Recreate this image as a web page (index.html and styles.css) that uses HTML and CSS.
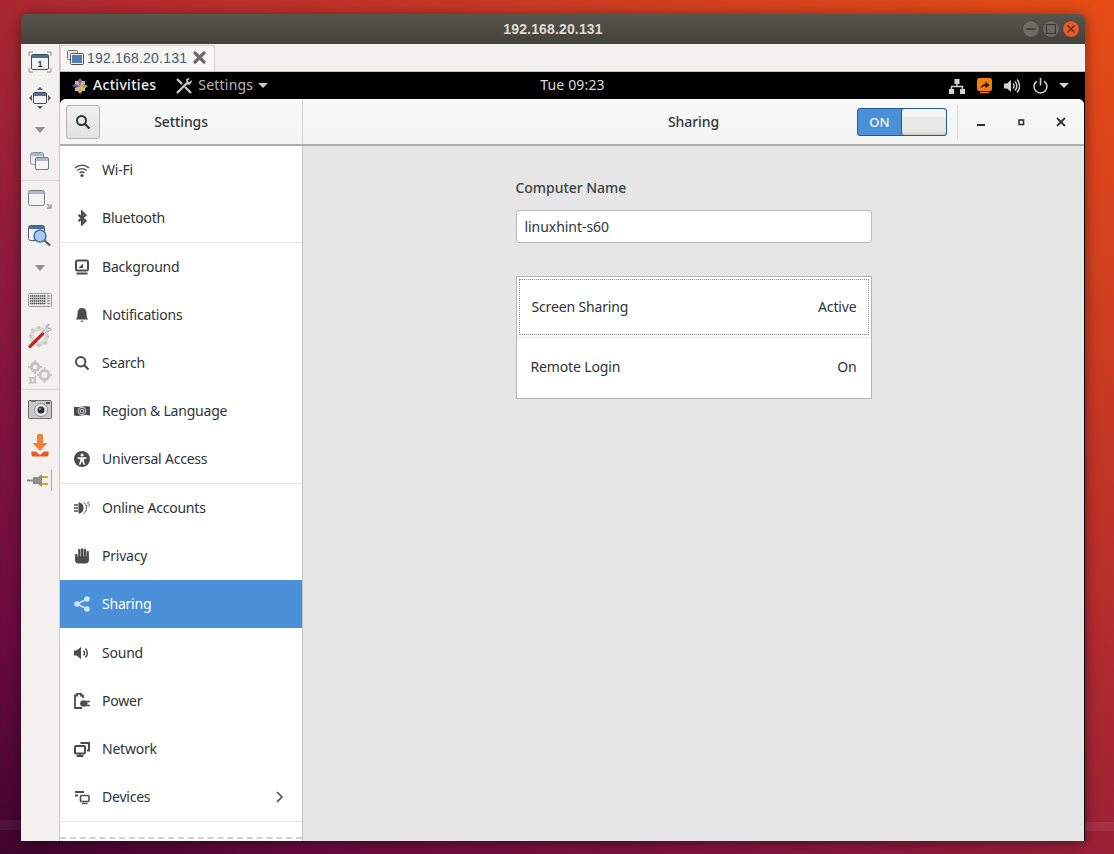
FILE: index.html
```html
<!DOCTYPE html>
<html lang="en">
<head>
<meta charset="utf-8">
<title>192.168.20.131</title>
<link rel="stylesheet" href="styles.css">
</head>
<body>
<div class="window">
  <div class="titlebar">
    <span class="title-text">192.168.20.131</span>
    <div class="wm-buttons">
      <span class="wm wm-min"><svg width="16" height="16" viewBox="0 0 16 16"><path d="M3.500 8h9" stroke="#3a3935" stroke-width="1.400"/></svg></span>
      <span class="wm wm-max"><svg width="16" height="16" viewBox="0 0 16 16"><rect x="3.500" y="3.500" width="9" height="9" fill="none" stroke="#3a3935" stroke-width="1.200"/></svg></span>
      <span class="wm wm-close"><svg width="16" height="16" viewBox="0 0 16 16"><path d="M4.500 4.500l7 7M11.500 4.500l-7 7" stroke="#6b2a12" stroke-width="1.500"/></svg></span>
    </div>
  </div>
  <div class="window-body">
    <div class="tools">
      <div class="tool">
        <svg width="24" height="22" viewBox="0 0 24 22"><path d="M1 5V1h4M19 1h4v4M23 17v4h-4M5 21H1v-4" fill="none" stroke="#8b8f92"/><rect x="3.500" y="3.500" width="17" height="15" rx="1.500" fill="#f4f4f4" stroke="#4a4d50"/><rect x="4" y="4" width="16" height="3" fill="#4d6f9e"/><text x="12" y="15.500" class="tool-num">1</text></svg>
      </div>
      <div class="tool">
        <svg width="24" height="24" viewBox="0 0 24 24"><path d="M12 1l3 3H9zM12 23l-3-3h6zM1 12l3-3v6zM23 12l-3 3V9z" fill="#55585a"/><rect x="5.500" y="6.500" width="13" height="11" rx="1.500" fill="#f4f4f4" stroke="#4a4d50"/><rect x="6" y="7" width="12" height="3" fill="#4d6f9e"/></svg>
      </div>
      <div class="tool tool-sm"><svg width="10" height="6" viewBox="0 0 10 6"><path d="M0 0h10L5 6z" fill="#8e8e8a"/></svg></div>
      <div class="tool">
        <svg width="20" height="20" viewBox="0 0 20 20"><rect x="0.500" y="0.500" width="13" height="12" rx="2" fill="#e9e9ea" stroke="#8f9296"/><rect x="1" y="1" width="12" height="3" fill="#a9b6cb"/><rect x="5.500" y="5.500" width="13" height="12" rx="1.500" fill="#f6f6f6" stroke="#74777b"/><rect x="6" y="6" width="12" height="3" fill="#a6b7d0"/></svg>
      </div>
      <div class="tool-sep"></div>
      <div class="tool">
        <svg width="26" height="20" viewBox="0 0 26 20"><rect x="1.500" y="0.500" width="16" height="15" rx="2" fill="#f2f2f2" stroke="#7b7e82"/><rect x="2" y="1" width="15" height="3" fill="#a6b7d0"/><path d="M20 14l4 4M24 14v4h-4" fill="none" stroke="#9b9d9f" stroke-width="1.300"/></svg>
      </div>
      <div class="tool">
        <svg width="24" height="24" viewBox="0 0 24 24"><rect x="0.500" y="1.500" width="16" height="15" rx="2" fill="#f2f2f2" stroke="#55585c"/><rect x="1" y="2" width="15" height="3" fill="#4d6f9e"/><circle cx="12" cy="12" r="6" fill="#a9c8ec" stroke="#3f6ea8" stroke-width="1.500"/><path d="M16.500 16.500l5.500 5" stroke="#55585c" stroke-width="2.200"/></svg>
      </div>
      <div class="tool tool-sm"><svg width="10" height="6" viewBox="0 0 10 6"><path d="M0 0h10L5 6z" fill="#8e8e8a"/></svg></div>
      <div class="tool">
        <svg width="24" height="14" viewBox="0 0 24 14"><rect x="0.500" y="0.500" width="23" height="13" rx="1" fill="#ededed" stroke="#9a9c9c"/><path d="M2 3h16M2 5.500h16M2 8h16M2 10.500h16" stroke="#47484a" stroke-width="1.500" stroke-dasharray="1.500 .5"/><path d="M19.500 3h2M19.500 5.500h2M19.500 8h2M19.500 10.500h2" stroke="#47484a" stroke-width="1.500" stroke-dasharray="1 .5"/></svg>
      </div>
      <div class="tool">
        <svg width="24" height="24" viewBox="0 0 24 24"><circle cx="11" cy="12.500" r="7.500" fill="#f4f4f4" stroke="#dadada" stroke-width="4.500"/><path d="M11 2v3M11 20v3M1 12.500h3M18 12.500h3M3.500 5l2 2M16.500 18l2 2M3.500 20l2-2" stroke="#c4c4c4" stroke-width="2.600"/><path d="M13 9.500l5-5a4 4 0 0 1 1-3.500l2.500-.5-2 2.200 1 1.800 2-.5.500 1.500a4 4 0 0 1-4.500 2L15 11z" fill="#e2e2e2" stroke="#8a8a8a" stroke-width=".7"/><path d="M2 22.500L14.500 10" stroke="#c9252b" stroke-width="3.200" stroke-linecap="round"/></svg>
      </div>
      <div class="tool">
        <svg width="25" height="25" viewBox="0 0 25 25"><g fill="none" stroke="#c4c4c2"><circle cx="7" cy="7" r="3.800" stroke-width="3"/><circle cx="16.500" cy="15" r="4.500" stroke-width="3.200"/><rect x="2.500" y="18" width="4.500" height="4.500" stroke-width="2"/><path d="M7 0v2M7 12v2M0 7h2M12 7h2M16.500 7.500v2M16.500 20.500v2M9 15h2M22 15h2M1 17l1 1M8 23l-1-1M1 24l1-1M8 16l-1 1" stroke-width="2"/></g></svg>
      </div>
      <div class="tool-sep tool-sep-2"></div>
      <div class="tool">
        <svg width="24" height="20" viewBox="0 0 24 20"><rect x="0.500" y="1.500" width="23" height="18" rx="1.500" fill="#c9c9c9" stroke="#6f6f6f"/><path d="M3 1h5v2H3z" fill="#6f6f6f"/><circle cx="13" cy="11" r="6.500" fill="#e8e8e8" stroke="#8c8c8c"/><circle cx="13" cy="11" r="3.500" fill="#25303e"/><circle cx="12" cy="10" r="1" fill="#9ab"/><rect x="18" y="3" width="4" height="2" fill="#555"/></svg>
      </div>
      <div class="tool">
        <svg width="18" height="23" viewBox="0 0 18 23"><path d="M6 1.500a1.500 1.500 0 0 1 1.500-1.500h3A1.500 1.500 0 0 1 12 1.500V9h4.500L9 17 1.500 9H6z" fill="#f0813a"/><path d="M0.500 17.500h4.500L9 21l4-3.500h4.500v3.500a1.500 1.500 0 0 1-1.500 1.500H2a1.500 1.500 0 0 1-1.500-1.500z" fill="#e45c22"/></svg>
      </div>
      <div class="tool">
        <svg width="26" height="24" viewBox="0 0 26 24"><path d="M0 11.500h7" stroke="#8a8a86" stroke-width="2"/><path d="M6 8h5l4-3v13l-4-3H6z" fill="#8e8e8a"/><path d="M15 8h6M15 15h6" stroke="#c8b21c" stroke-width="2"/><path d="M24.500 1v21" stroke="#b5b5b3" stroke-width="1.200"/></svg>
      </div>
    </div>
    <div class="session">
      <div class="tabs">
        <div class="tab">
          <svg class="tab-icon" width="17" height="15" viewBox="0 0 17 15"><rect x="0.500" y="0.500" width="10" height="9" rx="1" fill="#e7e7e7" stroke="#6d7074"/><rect x="3.500" y="3.500" width="13" height="11" rx="1" fill="#f5f5f5" stroke="#4e5256"/><rect x="5" y="5" width="10" height="8" fill="#4d7cb6"/></svg>
          <span class="tab-text">192.168.20.131</span>
          <svg class="tab-close" width="13" height="13" viewBox="0 0 13 13"><path d="M2 2l9 9M11 2l-9 9" stroke="#6a6a66" stroke-width="3.200" stroke-linecap="round"/></svg>
        </div>
      </div>
      <div class="remote">
        <div class="topbar">
          <div class="top-left">
            <span class="activities">
              <svg width="16" height="16" viewBox="0 0 16 16"><path d="M8 0l2.500 3v3.500L8 8 5.500 6.500V3z" fill="#9c5a8f"/><path d="M16 8l-3 2.500H9.500L8 8l1.500-1.500H13z" fill="#9cb23c"/><path d="M8 16l-2.500-3V9.500L8 8l2.500 1.500V13z" fill="#e2a92e"/><path d="M0 8l3-2.500h3.500L8 8 6.500 9.500H3z" fill="#4a5ea0"/><path d="M3 3h3L8 8 3 6zM13 3v3L8 8l2-5zM13 13h-3L8 8l5 2zM3 13v-3L8 8l-2 5z" fill="#c4bcae"/></svg>
              <span class="activities-label">Activities</span>
            </span>
            <span class="app-menu">
              <svg width="18" height="18" viewBox="0 0 18 18"><path d="M2 16L12 6" stroke="#c8c8c8" stroke-width="2.400"/><path d="M11 2.500a3.500 3.500 0 0 1 4-1l-2.300 2.300 1.500 1.500L16.500 3a3.500 3.500 0 0 1-4.700 4.500z" fill="#c8c8c8"/><path d="M2 2l5 5M10 10l6 6" stroke="#c8c8c8" stroke-width="2.400"/></svg>
              <span class="app-menu-label">Settings</span>
              <svg width="10" height="5" viewBox="0 0 10 5"><path d="M0 0h10L5 5z" fill="#c8c8c8"/></svg>
            </span>
          </div>
          <div class="clock">Tue 09:23</div>
          <div class="top-right">
            <svg width="16" height="16" viewBox="0 0 16 16"><path d="M5.500 1h5v5h-5zM0 11h5v5H0zM11 11h5v5h-5z" fill="#d2d2d2"/><path d="M8 6v2.500M2.500 11V8.500h11V11" fill="none" stroke="#d2d2d2" stroke-width="1.400"/></svg>
            <svg class="gap-1" width="15" height="16" viewBox="0 0 15 16"><rect y="0" width="15" height="13" rx="2.500" fill="#f07d0e"/><path d="M3.500 10.500c.5-3 2.500-4.500 5-4.500V3.500L12.500 7l-4 3.500V8c-2 0-3.500 1-5 2.500z" fill="#2a1a08"/><path d="M3 14.500h9" stroke="#f07d0e" stroke-width="1.500"/></svg>
            <svg class="gap-2" width="16" height="16" viewBox="0 0 16 16"><path d="M0 5.500h3L7 2v12l-4-3.500H0z" fill="#d2d2d2"/><path d="M9 5.500a3.500 3.500 0 0 1 0 5M11 3.500a6.500 6.500 0 0 1 0 9M13 1.500a9.500 9.500 0 0 1 0 13" fill="none" stroke="#d2d2d2" stroke-width="1.400"/></svg>
            <svg class="gap-3" width="15" height="16" viewBox="0 0 15 16"><path d="M4 3.200a6.400 6.400 0 1 0 7 0" fill="none" stroke="#d2d2d2" stroke-width="1.500"/><path d="M7.500 0v7.500" stroke="#d2d2d2" stroke-width="1.600"/></svg>
            <svg class="gap-4" width="10" height="5" viewBox="0 0 10 5"><path d="M0 0h10L5 5z" fill="#d2d2d2"/></svg>
          </div>
        </div>
        <div class="settings">
          <div class="header">
            <div class="header-left">
              <button class="search-btn" type="button"><svg width="16" height="16" viewBox="0 0 16 16"><circle cx="6.500" cy="6.500" r="4.500" fill="none" stroke="#2e3436" stroke-width="2"/><path d="M10 10l4.500 4.500" stroke="#2e3436" stroke-width="2.200"/></svg></button>
              <div class="header-title">Settings</div>
            </div>
            <div class="header-right">
              <div></div>
              <div class="header-title">Sharing</div>
              <div class="header-controls">
                <div class="toggle"><span class="toggle-on">ON</span><span class="toggle-knob"></span></div>
                <div class="header-sep"></div>
                <span class="ctl"><svg width="10" height="10" viewBox="0 0 10 10"><path d="M1 8h8" stroke="#2e3436" stroke-width="2"/></svg></span>
                <span class="ctl"><svg width="10" height="10" viewBox="0 0 10 10"><rect x="3" y="3" width="4.500" height="4.500" fill="none" stroke="#2e3436" stroke-width="1.600"/></svg></span>
                <span class="ctl"><svg width="10" height="10" viewBox="0 0 10 10"><path d="M1 1l8 8M9 1l-8 8" stroke="#2e3436" stroke-width="1.800"/></svg></span>
              </div>
            </div>
          </div>
          <div class="main">
            <nav class="sidebar">
              <div class="row">
                <svg class="ic" viewBox="0 0 16 16"><path d="M1 6a10 10 0 0 1 14 0M3.300 8.500a7 7 0 0 1 9.400 0M5.500 11a4 4 0 0 1 5 0" fill="none" stroke="currentColor" stroke-width="1.300"/><circle cx="8" cy="13.500" r="1.600" fill="currentColor"/></svg>
                <span>Wi-Fi</span>
              </div>
              <div class="row">
                <svg class="ic" viewBox="0 0 16 16"><path d="M4.500 4.800l7 6-3.500 3.500V1.700l3.500 3.500-7 6" fill="none" stroke="currentColor" stroke-width="2.200"/></svg>
                <span>Bluetooth</span>
              </div>
              <div class="sep"></div>
              <div class="row">
                <svg class="ic" viewBox="0 0 16 16"><rect x="2" y="1.500" width="12" height="10" rx="1.500" fill="none" stroke="currentColor" stroke-width="2"/><path d="M4.500 9L9 4.500V9z" fill="currentColor"/><path d="M2.500 14.500h11" stroke="currentColor" stroke-width="2"/></svg>
                <span>Background</span>
              </div>
              <div class="row">
                <svg class="ic" viewBox="0 0 16 16"><path d="M8 1c-3 0-4.500 2-4.500 5S3 10.500 2 12.500h12C13 10.500 12.500 9 12.500 6S11 1 8 1z" fill="currentColor"/><path d="M6.800 14.200h2.400" stroke="currentColor" stroke-width="1.200"/></svg>
                <span>Notifications</span>
              </div>
              <div class="row">
                <svg class="ic" viewBox="0 0 16 16"><circle cx="6.700" cy="6.700" r="4.700" fill="none" stroke="currentColor" stroke-width="2"/><path d="M10.200 10.200l4.300 4.300" stroke="currentColor" stroke-width="2.200"/></svg>
                <span>Search</span>
              </div>
              <div class="row">
                <svg class="ic" viewBox="0 0 16 16"><path d="M0 3.500c3 1 5 .5 8 0s5-.5 8 0v9c-3-1-5-.5-8 0s-5 .5-8 0z" fill="currentColor"/><circle cx="8" cy="8" r="3.800" fill="none" stroke="#fff" stroke-width=".8"/><circle cx="8" cy="8" r="1.800" fill="none" stroke="#fff" stroke-width=".8"/></svg>
                <span>Region &amp; Language</span>
              </div>
              <div class="row">
                <svg class="ic" viewBox="0 0 16 16"><circle cx="8" cy="8" r="8" fill="currentColor"/><circle cx="8" cy="4" r="1.500" fill="#fff"/><path d="M3.500 6.200h9v1.300L9.500 8.500l1.500 5-1.300.4L8 10l-1.700 3.900-1.300-.4 1.500-5-3-1z" fill="#fff"/></svg>
                <span>Universal Access</span>
              </div>
              <div class="sep"></div>
              <div class="row">
                <svg class="ic" viewBox="0 0 16 16"><path d="M0 5h4M0 8h4M0 11h4" stroke="currentColor" stroke-width="1.300"/><path d="M4.500 2.500c3.500 0 5 2.500 5 5.500s-1.500 5.500-5 5.500z" fill="currentColor"/><path d="M9.500 2.500c2 1 3 3 3 5.500s-1 4.500-3 5.500" fill="none" stroke="currentColor" stroke-width="1"/><path d="M15.700 2.500c-1-.7-2.500-.2-2 .8s2.300 1 2 2-1.500 1-2.300.5" fill="none" stroke="currentColor" stroke-width=".8"/></svg>
                <span>Online Accounts</span>
              </div>
              <div class="row">
                <svg class="ic" viewBox="0 0 16 16"><path d="M2.300 7v6M5.300 2v7M8.100 1.500V9M10.900 2v7M13.700 4v8" stroke="currentColor" stroke-width="2.300" stroke-linecap="round" fill="none"/><path d="M1.200 8.500h13.600V12a3.500 3.500 0 0 1-3.500 3.500H4.700A3.500 3.500 0 0 1 1.200 12z" fill="currentColor"/></svg>
                <span>Privacy</span>
              </div>
              <div class="row row-active">
                <svg class="ic" viewBox="0 0 16 16"><circle cx="3" cy="8" r="2.800" fill="currentColor"/><circle cx="13" cy="3" r="2.800" fill="currentColor"/><circle cx="13" cy="13" r="2.800" fill="currentColor"/><path d="M3 8l10-5M3 8l10 5" stroke="currentColor" stroke-width="1.400"/></svg>
                <span>Sharing</span>
              </div>
              <div class="row row-after">
                <svg class="ic" viewBox="0 0 16 16"><path d="M0 5.500h2.500L7 2v12l-4.500-3.500H0z" fill="currentColor"/><path d="M9.500 5.500a3.500 3.500 0 0 1 0 5M11.500 3.500a6.500 6.500 0 0 1 0 9" fill="none" stroke="currentColor" stroke-width="1.500"/></svg>
                <span>Sound</span>
              </div>
              <div class="row">
                <svg class="ic" viewBox="0 0 16 16"><path d="M8 15H1V2.500h2V.8h4v1.700h2V5" fill="none" stroke="currentColor" stroke-width="1.800"/><path d="M6 10.500a3.800 3.800 0 0 1 7.500 0 3.800 3.800 0 0 1-7.500 0z" fill="currentColor"/><path d="M12 8.500h4M12 12.500h4" stroke="currentColor" stroke-width="1.500"/></svg>
                <span>Power</span>
              </div>
              <div class="row">
                <svg class="ic" viewBox="0 0 16 16"><rect x="1" y="5" width="10" height="7.500" rx="1" fill="none" stroke="currentColor" stroke-width="2"/><path d="M2.500 15h7M6 12.500V15" stroke="currentColor" stroke-width="1.800"/><path d="M6.500 2h8.500v7.500h-2" fill="none" stroke="currentColor" stroke-width="2"/></svg>
                <span>Network</span>
              </div>
              <div class="row row-more">
                <svg class="ic" viewBox="0 0 16 16"><path d="M1 3h9M1 6.500h3" stroke="currentColor" stroke-width="1.800"/><rect x="6.500" y="6.500" width="8.500" height="6" rx="1" fill="none" stroke="currentColor" stroke-width="1.600"/><path d="M8 14.500h5.500" stroke="currentColor" stroke-width="1.400"/></svg>
                <span class="row-label">Devices</span>
                <svg class="chevron" width="8" height="12" viewBox="0 0 8 12"><path d="M1 1l5 5-5 5" fill="none" stroke="#4b4e50" stroke-width="1.600"/></svg>
              </div>
              <div class="sep"></div>
              <div class="sidebar-end"></div>
            </nav>
            <section class="content">
              <div class="panel">
                <div class="field-label">Computer Name</div>
                <div class="name-input">linuxhint-s60</div>
                <div class="list">
                  <div class="list-row list-row-focus"><span>Screen Sharing</span><span>Active</span></div>
                  <div class="list-sep"></div>
                  <div class="list-row"><span>Remote Login</span><span>On</span></div>
                </div>
              </div>
            </section>
          </div>
        </div>
      </div>
    </div>
  </div>
</div>
</body>
</html>
```

FILE: styles.css
```css
* { box-sizing: border-box; }
html, body { margin: 0; height: 100%; }
body {
  width: 1114px;
  height: 854px;
  overflow: hidden;
  padding: 14px 29px 13px 21px;
  font-family: "Noto Sans", sans-serif;
  font-size: 14px;
  color: #2e3436;
  background:
    linear-gradient(rgba(255, 255, 255, .07), rgba(255, 255, 255, .07)) right 0 top 822px / 29px 9px no-repeat,
    linear-gradient(rgba(255, 255, 255, .05), rgba(255, 255, 255, .05)) left 0 top 820px / 21px 10px no-repeat,
    linear-gradient(33deg, #3f042c 0%, #6b0a40 14%, #8f1a3c 38%, #b72e2c 62%, #d2401f 82%, #e64c15 100%);
}
.window {
  height: 827px;
  display: flex;
  flex-direction: column;
  border-radius: 6px 6px 0 0;
  overflow: hidden;
  box-shadow: 0 2px 14px rgba(0, 0, 0, .45);
}
.titlebar {
  height: 30px;
  flex: none;
  position: relative;
  display: flex;
  align-items: center;
  justify-content: center;
  background: linear-gradient(#57554d, #43413b);
}
.title-text {
  font-family: "Liberation Sans", sans-serif;
  font-size: 14px;
  font-weight: 700;
  letter-spacing: .15px;
  color: #dfdbd2;
}
.wm-buttons {
  position: absolute;
  right: 6px;
  top: 7px;
  display: flex;
  gap: 4px;
}
.wm {
  width: 16px;
  height: 16px;
  border-radius: 50%;
  background: #6c6b65;
  box-shadow: 0 0 0 .5px #3b3a35;
  display: flex;
}
.wm-close { background: #e65a2b; }
.window-body {
  flex: 1;
  min-height: 0;
  display: flex;
  background: #f2f1ef;
}
.tools {
  width: 39px;
  flex: none;
  display: flex;
  flex-direction: column;
  border-right: 1px solid #c9c9c7;
}
.tool {
  height: 36px;
  flex: none;
  display: flex;
  align-items: center;
  justify-content: center;
}
.tool-sm { height: 28px; }
.tool-sep {
  height: 1px;
  flex: none;
  background: #d4d3d1;
  margin-bottom: 1px;
}
.tool-sep-2 { margin-top: -1px; }
.tool-num {
  font-family: "Liberation Sans", sans-serif;
  font-size: 9px;
  font-weight: 700;
  fill: #2e3436;
  text-anchor: middle;
}
.session {
  flex: 1;
  min-width: 0;
  display: flex;
  flex-direction: column;
}
.tabs {
  height: 28px;
  flex: none;
  display: flex;
  border-bottom: 1px solid #c4c3c1;
  padding-top: 1px;
}
.tab {
  width: 155px;
  height: 26px;
  display: flex;
  align-items: center;
  padding: 0 0 2px 6px;
  background: #f7f6f5;
  border: 1px solid #d0cfcd;
  border-bottom: none;
  border-radius: 3px 3px 0 0;
}
.tab-icon { flex: none; margin-right: 3px; }
.tab-text {
  font-family: "Liberation Sans", sans-serif;
  font-size: 14px;
  letter-spacing: .2px;
  color: #44596e;
}
.tab-close { flex: none; margin-left: 6px; }
.remote {
  flex: 1;
  min-height: 0;
  display: flex;
  flex-direction: column;
  background: #000;
}
.topbar {
  height: 27px;
  flex: none;
  display: grid;
  grid-template-columns: 1fr auto 1fr;
  align-items: center;
  color: #fff;
}
.top-left {
  display: flex;
  align-items: center;
  padding-left: 12px;
}
.activities {
  display: flex;
  align-items: center;
  gap: 5px;
  font-weight: 500;
  color: #f2f2f2;
}
.activities-label { letter-spacing: .3px; margin-bottom: 2px; }
.app-menu {
  display: flex;
  align-items: center;
  gap: 5px;
  margin-left: 19px;
  color: #b8b8b8;
}
.app-menu-label { letter-spacing: .2px; margin-bottom: 2px; }
.clock { color: #dcdcdc; letter-spacing: .15px; margin-bottom: 2px; }
.top-right {
  display: flex;
  align-items: center;
  justify-content: flex-end;
  padding-right: 16px;
}
.gap-1 { margin-left: 12px; }
.gap-2 { margin-left: 12px; }
.gap-3 { margin-left: 13px; }
.gap-4 { margin-left: 11px; }
.settings {
  flex: 1;
  min-height: 0;
  display: flex;
  flex-direction: column;
  margin-right: 1px;
  border-radius: 6px 6px 0 0;
  overflow: hidden;
  background: #f6f6f6;
}
.header {
  height: 47px;
  flex: none;
  display: flex;
  background: linear-gradient(#f8f8f8, #f4f4f4);
  border-bottom: 2px solid #aeada8;
}
.header-left {
  width: 243px;
  flex: none;
  position: relative;
  display: flex;
  align-items: center;
  justify-content: center;
  border-right: 1px solid #d2d2d0;
}
.search-btn {
  position: absolute;
  left: 6px;
  top: 6px;
  width: 34px;
  height: 34px;
  padding: 0;
  display: flex;
  align-items: center;
  justify-content: center;
  background: linear-gradient(#efefee, #e2e2e0);
  border: 1px solid #b5b4b0;
  border-radius: 3px;
}
.header-title { font-weight: 500; letter-spacing: -.1px; }
.header-right {
  flex: 1;
  min-width: 0;
  display: grid;
  grid-template-columns: 1fr auto 1fr;
  align-items: center;
}
.header-controls {
  display: flex;
  align-items: center;
  justify-content: flex-end;
  padding-right: 3px;
}
.toggle {
  width: 90px;
  height: 28px;
  display: flex;
  border: 1px solid #1f5a99;
  border-radius: 3px;
  overflow: hidden;
  background: #4a90d9;
}
.toggle-on {
  width: 43px;
  text-align: center;
  line-height: 26px;
  font-size: 13px;
  font-weight: 500;
  color: #f3f7fc;
}
.toggle-knob {
  flex: 1;
  background: linear-gradient(#f4f4f3 0 30%, #e8e8e7 30% 85%, #cfcfcd 100%);
  border-left: 1px solid #1f5a99;
  border-radius: 3px;
}
.header-sep {
  width: 1px;
  height: 34px;
  margin: 0 3px 0 10px;
  background: #dcdcda;
}
.ctl {
  width: 40px;
  height: 34px;
  display: flex;
  align-items: center;
  justify-content: center;
}
.main {
  flex: 1;
  min-height: 0;
  display: flex;
}
.sidebar {
  width: 243px;
  flex: none;
  background: #fff;
  border-right: 1px solid #c2c2c0;
  display: flex;
  flex-direction: column;
  letter-spacing: -.22px;
}
.row {
  height: 48px;
  flex: none;
  display: flex;
  align-items: center;
  gap: 12px;
  padding: 0 14px;
  color: #2e3436;
}
.row > span { margin-bottom: 2px; }
.row-after { margin-top: 1px; }
.row-active {
  background: #4a90d9;
  color: #fff;
}
.row-active .ic { color: #cfe2f6; }
.row-label { flex: 1; }
.ic {
  width: 16px;
  height: 16px;
  flex: none;
  color: #4a4d4f;
}
.chevron { margin-right: 4px; }
.sep {
  height: 1px;
  flex: none;
  background: #e4e4e4;
}
.sidebar-end {
  height: 2px;
  margin-top: 15px;
  border-top: 2px dashed #d0d0d0;
}
.content {
  flex: 1;
  min-width: 0;
  background: #e6e6e6;
  display: flex;
  justify-content: center;
}
.panel {
  width: 356px;
  padding-top: 32px;
  letter-spacing: -.05px;
}
.field-label {
  line-height: 20px;
  font-weight: 500;
  color: #3a3f41;
}
.name-input {
  height: 33px;
  margin-top: 12px;
  padding-left: 8px;
  line-height: 31px;
  background: #fff;
  border: 1px solid #b8b8b5;
  border-radius: 3px;
}
.list {
  margin-top: 33px;
  height: 123px;
  padding: 2px;
  background: #fff;
  border: 1px solid #b4b4b2;
  letter-spacing: -.15px;
}
.list-row {
  height: 58px;
  display: flex;
  align-items: center;
  justify-content: space-between;
  padding: 0 12px;
}
.list-row > span { margin-bottom: 2px; }
.list-row-focus { border: 1px dotted #8f8f8f; height: 56px; padding: 0 11px 0 12px; }
.list-sep {
  height: 1px;
  margin: 2px -2px 0;
  background: #e8e8e8;
}
```
